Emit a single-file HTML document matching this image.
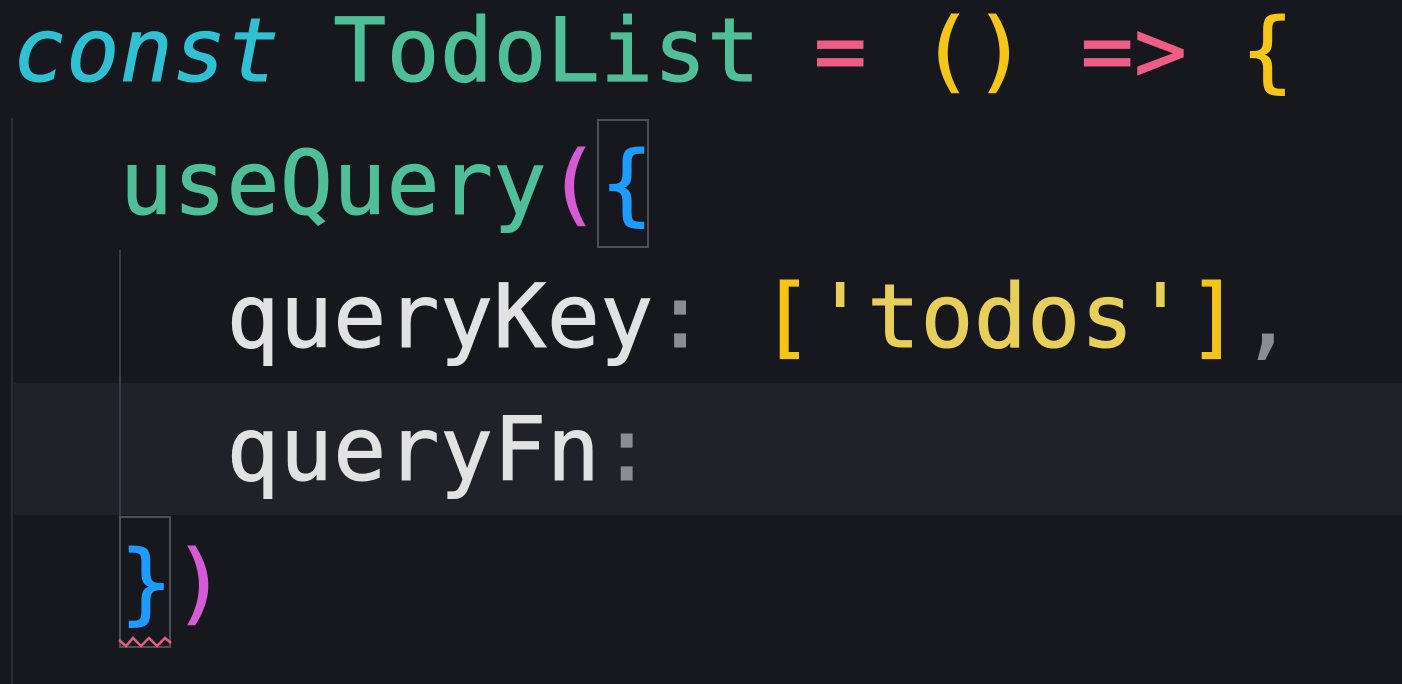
<!DOCTYPE html>
<html><head><meta charset="utf-8"><style>
html,body{margin:0;padding:0;}
body{width:1402px;height:684px;overflow:hidden;background:#16181d;position:relative;
font-family:"DejaVu Sans Mono","Liberation Mono",monospace;font-size:88px;}
.ln{position:absolute;left:13px;height:133px;line-height:133px;white-space:pre;letter-spacing:0.4px;-webkit-text-stroke:1px currentColor;}
.ln span{-webkit-text-stroke:1px currentColor;}
.hl{position:absolute;left:14px;right:0;top:383px;height:132px;background:#1f2228;}
.g{position:absolute;width:2px;background:#2a2e36;}
.box{position:absolute;border:2px solid #4a4f58;box-sizing:border-box;}
.c{color:#2fc1d3;font-style:italic}
.gr{color:#4fbf97}
.pk{color:#ef5d85}
.y{color:#f5c518}
.m{color:#d65ad6}
.b{color:#1e9bff}
.w{color:#e2e2e2}
.gy{color:#8a8d92}
.s{color:#e7cf5a}
</style></head><body>
<div class="hl"></div>
<div class="g" style="left:11px;top:118px;height:566px;"></div>
<div class="g" style="left:119px;top:250px;height:266px;background:#3a3e46"></div>
<div class="box" style="left:597px;top:119px;width:52px;height:129px;"></div>
<div class="box" style="left:119px;top:516px;width:52px;height:132px;"></div>
<svg style="position:absolute;left:118px;top:634px" width="54" height="14"><path d="M1 6 L8 12 L15 4 L23 12 L31 4 L39 12 L47 4 L53 9" fill="none" stroke="#e0607e" stroke-width="2.5"/></svg>
<div class="ln" style="top:-16px"><span class="c">const</span> <span class="gr">TodoList</span> <span class="pk">=</span> <span class="y">()</span> <span class="pk">=&gt;</span> <span class="y">{</span></div>
<div class="ln" style="top:117px">  <span class="gr">useQuery</span><span class="m">(</span><span class="b">{</span></div>
<div class="ln" style="top:250px">    <span class="w">queryKey</span><span class="gy">:</span> <span class="y">[</span><span class="s">'todos'</span><span class="y">]</span><span class="gy">,</span></div>
<div class="ln" style="top:383px">    <span class="w">queryFn</span><span class="gy">:</span></div>
<div class="ln" style="top:516px">  <span class="b">}</span><span class="m">)</span></div>
</body></html>
